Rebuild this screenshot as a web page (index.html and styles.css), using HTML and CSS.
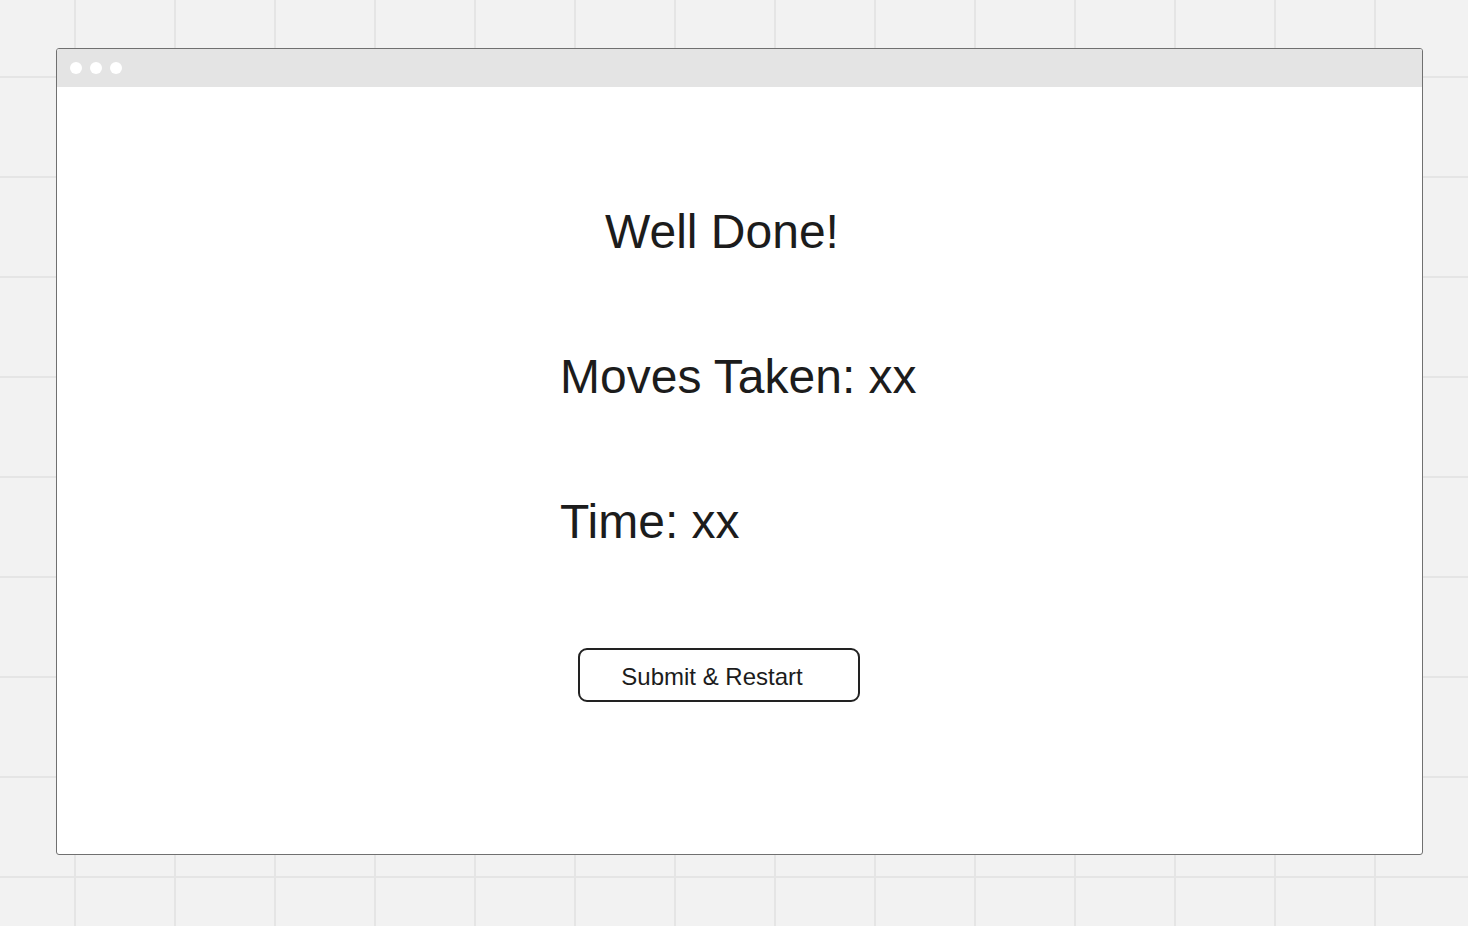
FILE: index.html
```html
<!DOCTYPE html>
<html lang="en">
<head>
    <meta charset="UTF-8">
    <meta name="viewport" content="width=device-width, initial-scale=1.0">
    <title>Well Done</title>
    <link rel="stylesheet" href="styles.css">
</head>
<body>
    <div class="window">
        <div class="title-bar">
            <span class="dot"></span>
            <span class="dot"></span>
            <span class="dot"></span>
        </div>
        <div class="content">
            <div class="result">
                <div class="heading">Well Done!</div>
                <div class="stat">Moves Taken: xx</div>
                <div class="stat">Time: xx</div>
                <button class="submit">Submit &amp; Restart</button>
            </div>
        </div>
    </div>
</body>
</html>
```

FILE: styles.css
```css
body {
    margin: 0;
    height: 926px;
    overflow: hidden;
    background-color: #f2f2f2;
    background-image:
        linear-gradient(to right, #e5e5e5 2px, transparent 2px),
        linear-gradient(to bottom, #e5e5e5 2px, transparent 2px);
    background-size: 100px 100px;
    background-position: 74px 76px;
    font-family: "Liberation Sans", Arial, sans-serif;
    color: #1c1c1c;
    padding-top: 48px;
    box-sizing: border-box;
}
.window {
    margin-left: 56px;
    width: 1367px;
    height: 807px;
    box-sizing: border-box;
    border: 1px solid #707070;
    border-radius: 3px;
    background: #ffffff;
    overflow: hidden;
    display: flex;
    flex-direction: column;
}
.title-bar {
    height: 38px;
    background: #e4e4e4;
    display: flex;
    align-items: center;
    gap: 8px;
    padding-left: 13px;
    flex-shrink: 0;
}
.dot {
    width: 12px;
    height: 12px;
    border-radius: 50%;
    background: #ffffff;
}
.content {
    padding: 118px 0 0 503px;
}
.result {
    width: 318px;
    display: flex;
    flex-direction: column;
}
.heading {
    font-size: 48px;
    line-height: 54px;
    text-align: center;
    padding-left: 6px;
    white-space: nowrap;
}
.stat {
    font-size: 48px;
    line-height: 54px;
    margin-top: 91px;
    white-space: nowrap;
}
.submit {
    margin: 99px 0 0 18px;
    width: 282px;
    height: 54px;
    box-sizing: border-box;
    border: 2px solid #222222;
    border-radius: 9px;
    background: #ffffff;
    font-family: "Liberation Sans", Arial, sans-serif;
    font-size: 24px;
    color: #1c1c1c;
    padding: 3px 14px 0 0;
    cursor: pointer;
}
```
